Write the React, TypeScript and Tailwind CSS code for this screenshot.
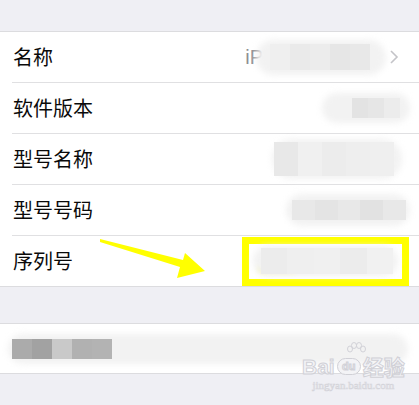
import React from 'react';

const cjk = { fontFamily: '"Noto Sans CJK SC", "Noto Sans", sans-serif' };

interface RowProps {
  label: string;
  last?: boolean;
  children?: React.ReactNode;
}

const Row: React.FC<RowProps> = ({ label, last, children }) => (
  <div className="bg-white">
    <div className="flex h-[50px] items-center justify-between pl-[13px]">
      <span className="text-[20px] text-[#0a0a0a]" style={cjk}>{label}</span>
      {children}
    </div>
    {!last && <div className="ml-[12px] h-px bg-[#e0e0e2]" />}
  </div>
);

// soft blurred redaction blob with a few mosaic tiles
const Blob: React.FC<{ className: string; tiles?: string[]; tileClass?: string }> = ({ className, tiles = [], tileClass = '' }) => (
  <div className={`relative flex items-center ${className}`}>
    <div className="absolute inset-0 rounded-full bg-[#f2f2f2] blur-[3px]" />
    <div className={`relative flex ${tileClass}`}>
      {tiles.map((c, i) => (
        <div key={i} className="h-full flex-1 blur-[0.5px]" style={{ backgroundColor: c }} />
      ))}
    </div>
  </div>
);

export default function App() {
  return (
    <div className="relative h-[405px] w-[419px] overflow-hidden bg-[#efeff4]">
      <div className="h-[32px] border-b border-[#dcdcdf]" />

      <div className="border-b border-[#dcdcdf]">
        <Row label="名称">
          <div className="flex items-center pr-[20px]">
            <span className="text-[20px] text-[#8e8e93]" style={{ fontFamily: '"Liberation Sans", sans-serif' }}>iP</span>
            <Blob className="-ml-[7px] h-[35px] w-[130px] justify-start pl-[14px]" tiles={['#efefef', '#eaeaea', '#ececec', '#e6e6e6', '#e8e8e8']} tileClass="h-[26px] w-[100px]" />
            <svg className="ml-[3px]" width="10" height="16" viewBox="0 0 10 16">
              <polyline points="2,2 8,8 2,14" fill="none" stroke="#c4c4c8" strokeWidth="1.6" />
            </svg>
          </div>
        </Row>
        <Row label="软件版本">
          <Blob className="mr-[9px] h-[30px] w-[88px] justify-end pr-[10px]" tiles={['#e3e3e3', '#e6e6e6', '#ececec']} tileClass="h-[20px] w-[48px]" />
        </Row>
        <Row label="型号名称">
          <Blob className="mr-[17px] h-[40px] w-[130px] justify-start pl-[2px]" tiles={['#e8e8e8', '#f0f0f0', '#ececec', '#eeeeee', '#efefef']} tileClass="h-[34px] w-[120px]" />
        </Row>
        <Row label="型号号码">
          <Blob className="mr-[9px] h-[32px] w-[124px] justify-start pl-[6px]" tiles={['#e8e8e8', '#e4e4e4', '#e8e8e8', '#e2e2e2', '#e8e8e8']} tileClass="h-[20px] w-[114px]" />
        </Row>
        <Row label="序列号" last>
          <div className="relative mr-[10px] flex h-[49px] w-[167px] items-center border-[7px] border-[#ffff00] bg-white px-[4px]">
            <div className="absolute bottom-[6px] left-[9px] h-[10px] w-[40px] rounded-full bg-[#f5f58a] blur-[2px]" />
            <Blob className="h-[30px] w-[148px] justify-start pl-[8px]" tiles={['#ececec', '#efefef', '#f0f0f0', '#ececec', '#f1f1f1']} tileClass="h-[26px] w-[132px]" />
          </div>
        </Row>
      </div>

      <div className="h-[36px]" />

      <div className="flex h-[51px] items-center border-y border-[#dcdcdf] bg-white px-[8px]">
        <Blob className="h-[30px] w-[400px] justify-start pl-[4px]" tiles={['#ababab', '#a2a2a2', '#c9c9c9', '#b1b1b1', '#b3b3b3']} tileClass="h-[20px] w-[100px]" />
      </div>

      {/* baidu watermark */}
      <div className="pointer-events-none absolute left-[302px] top-[342px] flex flex-col items-center">
        <svg width="22" height="18" viewBox="0 0 22 18" className="-mb-[4px] ml-[6px]">
          <g fill="none" stroke="#d2d2d8" strokeWidth="1">
            <ellipse cx="5" cy="7" rx="2.5" ry="3" />
            <ellipse cx="9" cy="3.5" rx="2.5" ry="3" />
            <ellipse cx="14" cy="3.5" rx="2.5" ry="3" />
            <ellipse cx="18" cy="7" rx="2.5" ry="3" />
          </g>
        </svg>
        <div className="flex items-center gap-[2px] text-[21px] font-bold leading-none" style={{ fontFamily: '"Liberation Sans", "Noto Sans CJK SC", sans-serif', WebkitTextStroke: '1px #d0d0d6', color: '#f3f3f6' }}>
          <span>Bai</span>
          <span className="flex h-[17px] w-[24px] items-center justify-center rounded-full border border-[#d0d0d6] bg-[#f3f3f6] text-[11px]">du</span>
          <span style={cjk}>经验</span>
        </div>
        <div className="mt-[3px] text-[11px] leading-none" style={{ fontFamily: '"Liberation Serif", serif', WebkitTextStroke: '0.6px #d4d4da', color: '#f4f4f6' }}>
          jingyan.baidu.com
        </div>
      </div>

      {/* arrow */}
      <svg className="pointer-events-none absolute left-0 top-0" width="419" height="405">
        <polygon points="100,239 183,260 185,253 205,271 177,278 180,267 100,242" fill="#ffff00" />
      </svg>
    </div>
  );
}
